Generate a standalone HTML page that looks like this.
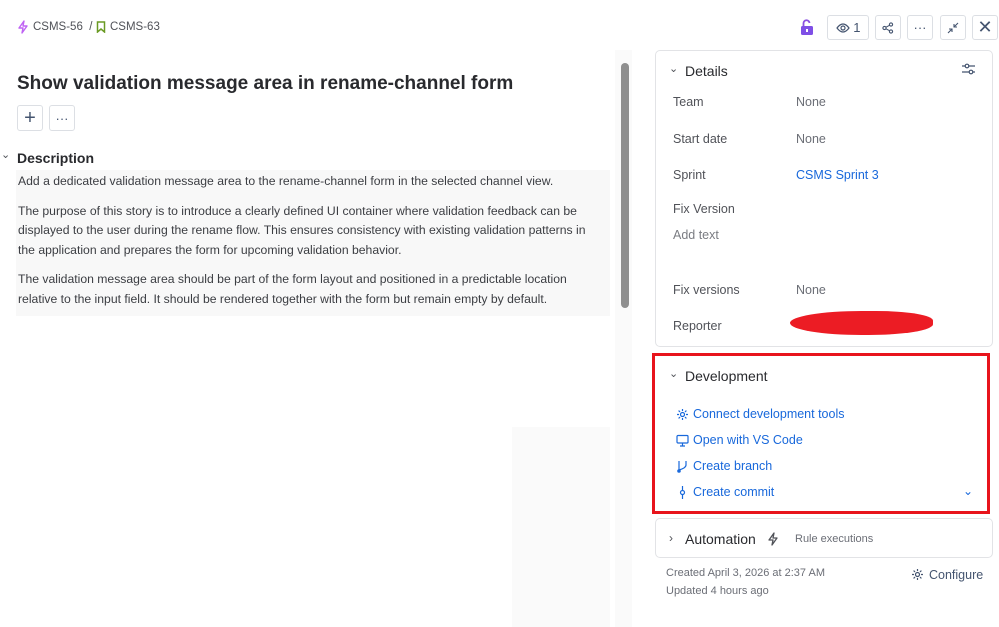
<!DOCTYPE html>
<html><head><meta charset="utf-8"><style>
*{box-sizing:border-box;margin:0;padding:0}
body{width:999px;height:627px;overflow:hidden;background:#fff;font-family:"Liberation Sans",sans-serif;color:#292a2e;position:relative}
.abs{position:absolute}
.btn{position:absolute;top:15px;height:25px;border:1px solid #dcdfe4;border-radius:3px;display:flex;align-items:center;justify-content:center;color:#44546f;font-size:13px}
.card{position:absolute;border:1px solid #e2e3e6;border-radius:5px;background:#fff}
.lab{position:absolute;left:673px;font-size:12.5px;color:#505258}
.val{position:absolute;left:796px;font-size:12.5px;color:#6b6e76}
.dl{position:absolute;left:676px;font-size:12.5px;color:#1868db;display:flex;align-items:center;gap:4px}
.dl svg{width:13px;height:13px}
p.d{font-size:12.2px;line-height:19.5px;color:#3b3d42;margin-bottom:10px}
</style></head><body>
<svg class="abs" style="left:17px;top:20px" width="12" height="14" viewBox="0 0 12 14"><path d="M7 1L2 8h4l-1 5 5-7H6z" fill="none" stroke="#bf63f3" stroke-width="1.4" stroke-linejoin="round"/></svg>
<div class="abs" style="left:33px;top:21px;font-size:11.5px;color:#505258">CSMS-56 &nbsp;/</div>
<svg class="abs" style="left:96px;top:21px" width="10" height="12" viewBox="0 0 10 12"><path d="M1.5 1h7v10L5 8 1.5 11z" fill="none" stroke="#6a9a23" stroke-width="1.5"/></svg>
<div class="abs" style="left:110px;top:21px;font-size:11.5px;color:#505258">CSMS-63</div>
<div class="abs" style="left:17px;top:73px;font-size:19px;font-weight:bold;color:#292a2e">Show validation message area in rename-channel form</div>
<div class="btn" style="left:17px;top:105px;width:26px;height:26px;font-size:20px;font-weight:300">+</div>
<div class="btn" style="left:49px;top:105px;width:26px;height:26px;font-size:13px">···</div>
<div class="abs" style="left:1px;top:148px;font-size:11px;color:#505258">⌄</div>
<div class="abs" style="left:17px;top:150px;font-size:14px;font-weight:bold;color:#292a2e">Description</div>
<div class="abs" style="left:16px;top:170px;width:594px;height:146px;background:#f8f8f8;padding:2px 2px">
<p class="d">Add a dedicated validation message area to the rename-channel form in the selected channel view.</p>
<p class="d" style="padding-right:20px">The purpose of this story is to introduce a clearly defined UI container where validation feedback can be displayed to the user during the rename flow. This ensures consistency with existing validation patterns in the application and prepares the form for upcoming validation behavior.</p>
<p class="d" style="padding-right:20px">The validation message area should be part of the form layout and positioned in a predictable location relative to the input field. It should be rendered together with the form but remain empty by default.</p>
</div>
<div class="abs" style="left:512px;top:427px;width:98px;height:200px;background:#fafafa"></div>
<div class="abs" style="left:615px;top:50px;width:17px;height:577px;background:#fafafa"></div>
<div class="abs" style="left:621px;top:63px;width:8px;height:245px;background:#8f8f8f;border-radius:4px"></div>
<svg class="abs" style="left:800px;top:19px" width="14" height="17" viewBox="0 0 14 17"><path d="M3.5 7V4.5a3 3 0 0 1 6-.5" fill="none" stroke="#8a4fe0" stroke-width="1.8"/><rect x="1" y="7" width="12" height="9" rx="1.5" fill="#7f4fe6"/><rect x="6" y="10" width="2" height="3" fill="#fff"/></svg>
<div class="btn" style="left:827px;width:42px"><svg width="14" height="10" viewBox="0 0 14 10"><path d="M1 5q6-8 12 0q-6 8-12 0z" fill="none" stroke="#44546f" stroke-width="1.2"/><circle cx="7" cy="5" r="2" fill="none" stroke="#44546f" stroke-width="1.2"/></svg>&nbsp;1</div>
<div class="btn" style="left:875px;width:26px"><svg width="12" height="12" viewBox="0 0 12 12" fill="none" stroke="#44546f" stroke-width="1.1"><circle cx="9" cy="2.5" r="1.6"/><circle cx="2.5" cy="6" r="1.6"/><circle cx="9" cy="9.5" r="1.6"/><path d="M4 5.2L7.5 3.3M4 6.8l3.5 1.9"/></svg></div>
<div class="btn" style="left:907px;width:26px">···</div>
<div class="btn" style="left:940px;width:26px"><svg width="12" height="12" viewBox="0 0 12 12" fill="none" stroke="#44546f" stroke-width="1.1"><path d="M11 1L7 5M7 2v3h3M1 11l4-4M2 7h3v3"/></svg></div>
<div class="btn" style="left:972px;width:26px;font-size:18px;color:#44546f">✕</div>
<div class="card" style="left:655px;top:50px;width:338px;height:297px"></div>
<div class="abs" style="left:669px;top:62px;font-size:11px;color:#505258">⌄</div>
<div class="abs" style="left:685px;top:63px;font-size:14px;color:#292a2e">Details</div>
<svg class="abs" style="left:961px;top:62px" width="15" height="14" viewBox="0 0 15 14" fill="none" stroke="#44546f" stroke-width="1.2"><path d="M1 4h13M1 10h13"/><circle cx="6" cy="4" r="1.8" fill="#fff"/><circle cx="10" cy="10" r="1.8" fill="#fff"/></svg>
<div class="lab" style="top:95px">Team</div><div class="val" style="top:95px">None</div>
<div class="lab" style="top:132px">Start date</div><div class="val" style="top:132px">None</div>
<div class="lab" style="top:168px">Sprint</div><div class="val" style="top:168px;color:#1868db">CSMS Sprint 3</div>
<div class="lab" style="top:202px">Fix Version</div>
<div class="lab" style="top:228px;color:#7a7c82">Add text</div>
<div class="lab" style="top:283px">Fix versions</div><div class="val" style="top:283px">None</div>
<div class="lab" style="top:319px">Reporter</div>
<div class="abs" style="left:790px;top:311px;width:143px;height:24px;background:#ec1c24;border-radius:50% 40% 45% 50%"></div>
<div class="abs" style="left:652px;top:353px;width:338px;height:161px;border:3px solid #e8141c;background:#fff"></div>
<div class="abs" style="left:669px;top:367px;font-size:11px;color:#505258">⌄</div>
<div class="abs" style="left:685px;top:368px;font-size:14px;color:#292a2e">Development</div>
<div class="dl" style="top:407px"><svg viewBox="0 0 13 13" fill="none" stroke="#1868db" stroke-width="1.2"><circle cx="6.5" cy="6.5" r="2"/><path d="M6.5 1v2M6.5 10v2M1 6.5h2M10 6.5h2M2.6 2.6l1.4 1.4M9 9l1.4 1.4M2.6 10.4L4 9M9 4l1.4-1.4"/></svg>Connect development tools</div>
<div class="dl" style="top:433px"><svg viewBox="0 0 13 13" fill="none" stroke="#1868db" stroke-width="1.2"><rect x="1" y="1.5" width="11" height="7.5" rx="1"/><path d="M6.5 9v2.5M4 12h5"/></svg>Open with VS Code</div>
<div class="dl" style="top:459px"><svg viewBox="0 0 13 13" fill="none" stroke="#1868db" stroke-width="1.2"><path d="M3 1v11M10 1v4q0 3-7 5"/><circle cx="3" cy="11" r="1.2"/></svg>Create branch</div>
<div class="dl" style="top:485px"><svg viewBox="0 0 13 13" fill="none" stroke="#1868db" stroke-width="1.2"><path d="M6.5 0v4.5M6.5 8.5V13"/><circle cx="6.5" cy="6.5" r="2"/></svg>Create commit</div>
<div class="abs" style="left:963px;top:484px;font-size:12px;color:#1868db">⌄</div>
<div class="card" style="left:655px;top:518px;width:338px;height:40px"></div>
<div class="abs" style="left:669px;top:531px;font-size:12px;color:#505258">›</div>
<div class="abs" style="left:685px;top:531px;font-size:14px;color:#292a2e">Automation</div>
<svg class="abs" style="left:767px;top:532px" width="11" height="14" viewBox="0 0 11 14"><path d="M7 1L2 8h4l-1 5 5-7H6z" fill="none" stroke="#505258" stroke-width="1.3" stroke-linejoin="round"/></svg>
<div class="abs" style="left:795px;top:533px;font-size:11px;color:#6b6e76">Rule executions</div>
<div class="abs" style="left:666px;top:567px;font-size:11px;color:#6b6e76">Created April 3, 2026 at 2:37 AM</div>
<div class="abs" style="left:666px;top:585px;font-size:11px;color:#6b6e76">Updated 4 hours ago</div>
<svg class="abs" style="left:911px;top:568px" width="13" height="13" viewBox="0 0 13 13" fill="none" stroke="#44546f" stroke-width="1.2"><circle cx="6.5" cy="6.5" r="2"/><path d="M6.5 1v2M6.5 10v2M1 6.5h2M10 6.5h2M2.6 2.6l1.4 1.4M9 9l1.4 1.4M2.6 10.4L4 9M9 4l1.4-1.4"/></svg>
<div class="abs" style="left:929px;top:568px;font-size:12.5px;color:#44546f">Configure</div>
</body></html>
